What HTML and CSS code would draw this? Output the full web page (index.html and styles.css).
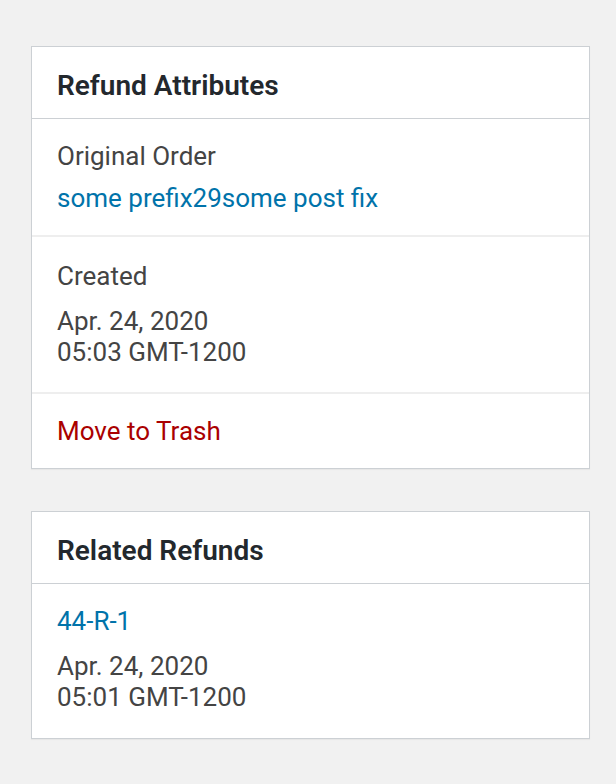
FILE: index.html
```
<!DOCTYPE html>
<html>
<head>
<meta charset="utf-8">
<title>Refund</title>
<link rel="stylesheet" href="styles.css">
</head>
<body>
<div class="postbox">
  <h2 class="hndle">Refund Attributes</h2>
  <div class="inside">
    <div class="section">
      <div class="label">Original Order</div>
      <a class="link" href="#">some prefix29some post fix</a>
    </div>
    <div class="section created">
      <div class="label">Created</div>
      <div class="date">Apr. 24, 2020<br>05:03 GMT-1200</div>
    </div>
    <div class="section actions">
      <a class="trash" href="#">Move to Trash</a>
    </div>
  </div>
</div>

<div class="postbox">
  <h2 class="hndle">Related Refunds</h2>
  <div class="inside related">
    <a class="link" href="#">44-R-1</a>
    <div class="date">Apr. 24, 2020<br>05:01 GMT-1200</div>
  </div>
</div>
</body>
</html>
```

FILE: styles.css
```
html, body {
  margin: 0;
  padding: 0;
  background: #f1f1f1;
}
body {
  padding: 46px 26px 0 31px;
  font-family: Roboto, "Liberation Sans", Arial, sans-serif;
  font-size: 26px;
  line-height: 31px;
  color: #444;
}
.postbox {
  background: #fff;
  border: 1px solid #ccd0d4;
  box-shadow: 0 1px 1px rgba(0,0,0,.04);
  margin-bottom: 42px;
}
.hndle {
  margin: 0;
  box-sizing: border-box;
  height: 72px;
  padding: 5px 25px 0;
  display: flex;
  align-items: center;
  font-size: 28px;
  font-weight: 600;
  color: #23282d;
  border-bottom: 1px solid #ccd0d4;
}
.section {
  padding: 22px 25px 21px;
  border-bottom: 2px solid #eee;
}
.section.created {
  padding-top: 24px;
  padding-bottom: 24px;
}
.section.actions {
  border-bottom: 0;
  padding-top: 22px;
  padding-bottom: 21px;
}
.label {
  margin-bottom: 11px;
}
.created .label {
  margin-bottom: 14px;
}
a {
  text-decoration: none;
}
.link {
  color: #0073aa;
}
.trash {
  color: #a00;
}
.related {
  padding: 22px 25px 25px;
}
.related .link {
  display: block;
  margin-bottom: 14px;
}
```
